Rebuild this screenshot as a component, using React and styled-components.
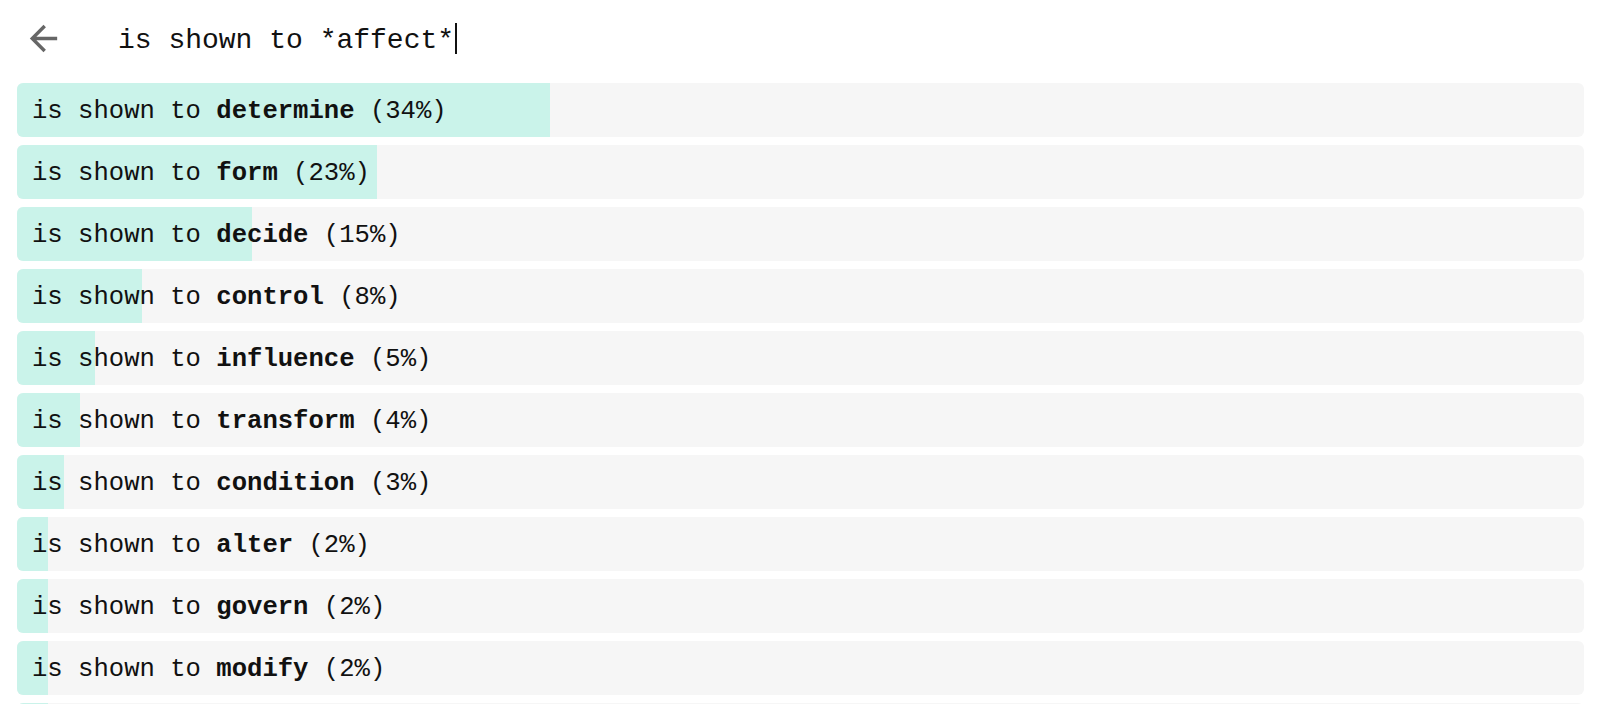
import React from 'react'
import styled, { createGlobalStyle } from 'styled-components'

const GlobalStyle = createGlobalStyle`
html, body {
  margin: 0;
  padding: 0;
  background: #ffffff;
  overflow: hidden;
}
body {
  font-family: 'Liberation Mono', 'DejaVu Sans Mono', monospace;
  color: #111111;
}
`

const Page = styled.div`
padding: 0 16px 0 17px;
`

const Header = styled.div`
display: flex;
align-items: center;
height: 77px;
`

const BackButton = styled.button`
display: flex;
align-items: center;
justify-content: center;
width: 41px;
height: 41px;
margin-left: 6px;
padding: 0;
border: none;
background: none;
cursor: pointer;
color: #666666;
`

const Query = styled.div`
display: flex;
align-items: center;
margin-left: 54px;
padding-top: 4px;
font-size: 28px;
line-height: 32px;
color: #111111;
white-space: pre;
`

const Caret = styled.span`
display: inline-block;
width: 1.5px;
height: 31px;
margin-left: 1px;
margin-top: -4px;
background: #111111;
`

const List = styled.div`
display: flex;
flex-direction: column;
gap: 8px;
margin-top: 6px;
`

const Row = styled.div`
position: relative;
height: 54px;
border-radius: 6px;
background: #f6f6f6;
overflow: hidden;
display: flex;
align-items: center;
`

const Fill = styled.div`
position: absolute;
left: 0;
top: 0;
bottom: 0;
background: #caf3ea;
`

const Label = styled.span`
position: relative;
padding-left: 15px;
padding-top: 3px;
font-size: 25.6px;
white-space: pre;
color: #111111;
`

const Word = styled.b`
font-weight: 700;
`

const results = [
  ['determine', 34],
  ['form', 23],
  ['decide', 15],
  ['control', 8],
  ['influence', 5],
  ['transform', 4],
  ['condition', 3],
  ['alter', 2],
  ['govern', 2],
  ['modify', 2],
  ['impact', 2],
]

const ArrowBack = () => (
  <svg width="41" height="41" viewBox="0 0 24 24" fill="currentColor">
    <path d="M20 11H7.83l5.59-5.59L12 4l-8 8 8 8 1.41-1.41L7.83 13H20v-2z" />
  </svg>
)

const App = () => {
  return (
    <Page>
      <GlobalStyle />
      <Header>
        <BackButton aria-label="Back">
          <ArrowBack />
        </BackButton>
        <Query>
          is shown to *affect*
          <Caret />
        </Query>
      </Header>
      <List>
        {results.map(([word, pct]) => (
          <Row key={word}>
            <Fill style={{ width: `${pct}%` }} />
            <Label>
              is shown to <Word>{word}</Word> ({pct}%)
            </Label>
          </Row>
        ))}
      </List>
    </Page>
  )
}

export default App
